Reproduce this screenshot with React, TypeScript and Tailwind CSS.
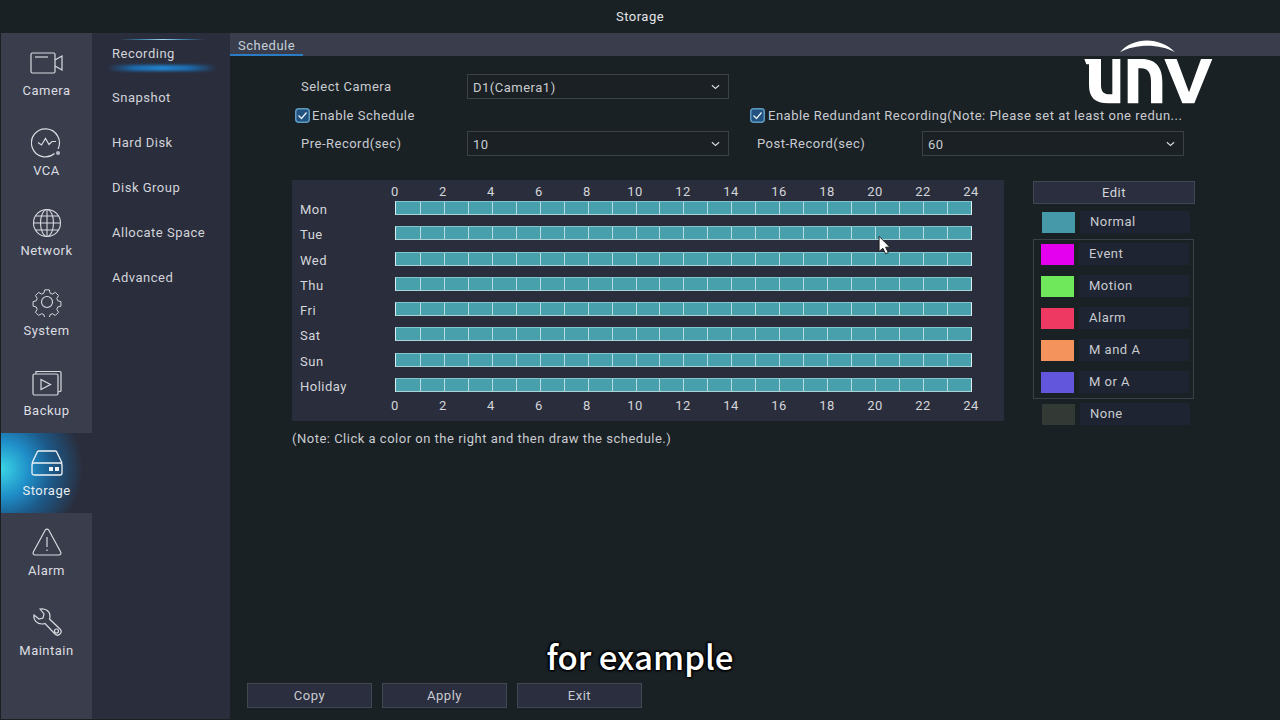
import type { ReactNode } from "react";

const font = "font-['Roboto',sans-serif]";

const navItems: { label: string; gap: string; icon: ReactNode; active?: boolean }[] = [
  {
    label: "Camera",
    gap: "gap-[7px]",
    icon: (
      <svg viewBox="0 0 34 24" className="w-[34px] h-[24px] fill-none stroke-[#d8dae0]" strokeWidth="1.2">
        <rect x="1" y="2" width="24" height="20" rx="1.5" />
        <path d="M25 9l7-4v14l-7-4" />
        <path d="M5 6h13" />
      </svg>
    ),
  },
  {
    label: "VCA",
    gap: "gap-[4px]",
    icon: (
      <svg viewBox="0 0 32 32" className="w-[32px] h-[32px] fill-none stroke-[#d8dae0]" strokeWidth="1.2">
        <path d="M27 23A14 14 0 1 0 23.5 27.5" />
        <path d="M7 16.5l3.5 2.5 4-6.5 3.500 6 3-3h4" />
        <circle cx="27" cy="27" r="2" className="fill-[#b9bcc6]" stroke="none" />
      </svg>
    ),
  },
  {
    label: "Network",
    gap: "gap-[4px]",
    icon: (
      <svg viewBox="0 0 30 30" className="w-[30px] h-[30px] fill-none stroke-[#d8dae0]" strokeWidth="1.1">
        <circle cx="15" cy="15" r="13.500" />
        <ellipse cx="15" cy="15" rx="6.500" ry="13.500" />
        <path d="M15 1.500v27M1.500 15h27M3.500 8h23M3.500 22h23" />
      </svg>
    ),
  },
  {
    label: "System",
    gap: "gap-[5px]",
    icon: (
      <svg viewBox="0 0 30 30" className="w-[30px] h-[30px] fill-none stroke-[#d8dae0]" strokeWidth="1.1">
        <circle cx="15" cy="15" r="5.500" />
        <path d="M12.500 1.500h5l1 3.700 2.500 1 3.300-1.900 3.500 3.500-1.900 3.300 1 2.500 3.600 1v5l-3.600 1-1 2.500 1.900 3.300-3.500 3.500-3.300-1.900-2.500 1-1 3.500h-5l-1-3.500-2.500-1-3.300 1.900-3.500-3.500 1.900-3.300-1-2.500-3.600-1v-5l3.600-1 1-2.500-1.900-3.300 3.500-3.500 3.300 1.900 2.500-1z" transform="translate(1.500 1.500) scale(.9)" strokeLinejoin="round" />
      </svg>
    ),
  },
  {
    label: "Backup",
    gap: "gap-[6px]",
    icon: (
      <svg viewBox="0 0 30 26" className="w-[30px] h-[26px] fill-none stroke-[#d8dae0]" strokeWidth="1.2">
        <rect x="1" y="4" width="25" height="21" rx="1.500" />
        <path d="M4 4V1.500h24a1 1 0 0 1 1 1V21l-3 1" />
        <path d="M9 9.500l9.500 5-9.500 5z" />
      </svg>
    ),
  },
  {
    label: "Storage",
    gap: "gap-[6px]",
    active: true,
    icon: (
      <svg viewBox="0 0 32 26" className="w-[32px] h-[26px] fill-none stroke-[#eef2f5]" strokeWidth="1.300">
        <path d="M1 13L6 2.500A2 2 0 0 1 8 1h16a2 2 0 0 1 2 1.500L31 13" />
        <rect x="1" y="13" width="30" height="12" rx="2" />
        <rect x="18" y="17" width="4" height="4" className="fill-[#eef2f5]" stroke="none" />
        <rect x="24" y="17" width="4" height="4" className="fill-[#eef2f5]" stroke="none" />
      </svg>
    ),
  },
  {
    label: "Alarm",
    gap: "gap-[6px]",
    icon: (
      <svg viewBox="0 0 30 28" className="w-[30px] h-[28px] fill-none stroke-[#d8dae0]" strokeWidth="1.200">
        <path d="M13.300 2a2 2 0 0 1 3.400 0l12 22a2 2 0 0 1-1.700 3H3a2 2 0 0 1-1.700-3z" />
        <path d="M15 9v10M15 21.500v1.500" />
      </svg>
    ),
  },
  {
    label: "Maintain",
    gap: "gap-[5px]",
    icon: (
      <svg viewBox="0 0 30 30" className="w-[30px] h-[30px] fill-none stroke-[#d8dae0]" strokeWidth="1.200">
        <path d="M2 8l5 4 4-1 1-4-4-5c5-1 10 2 10 7 0 1 0 2-.5 3L28 22c2 2 1 4 0 5s-3 2-5 0L13 16.500c-1 .5-2 .5-3 .5-5 0-9-4-8-9z" />
        <circle cx="24.500" cy="24" r="2" />
      </svg>
    ),
  },
];

const subItems = ["Recording", "Snapshot", "Hard Disk", "Disk Group", "Allocate Space", "Advanced"];
const days = ["Mon", "Tue", "Wed", "Thu", "Fri", "Sat", "Sun", "Holiday"];
const hours = [0, 2, 4, 6, 8, 10, 12, 14, 16, 18, 20, 22, 24];

const legend = [
  { name: "Event", color: "bg-[#e400ee]" },
  { name: "Motion", color: "bg-[#6fe85c]" },
  { name: "Alarm", color: "bg-[#ee3a63]" },
  { name: "M and A", color: "bg-[#f5935c]" },
  { name: "M or A", color: "bg-[#6257dc]" },
];

function Chevron() {
  return (
    <svg viewBox="0 0 10 6" className="w-[9px] h-[6px] fill-none stroke-[#d5d7dc]" strokeWidth="1.300">
      <path d="M1 1l4 3.500L9 1" />
    </svg>
  );
}

function Select({ value }: { value: string }) {
  return (
    <div className="w-[262px] h-[25px] flex items-center justify-between pl-[5px] pr-[8px] border border-[#3c4147] bg-[#1a2024] text-[13px] text-[#c9cbd0]">
      <span className="mt-[2px]">{value}</span>
      <Chevron />
    </div>
  );
}

function Check() {
  return (
    <svg viewBox="0 0 15 15" className="w-[15px] h-[15px] shrink-0">
      <rect x="0.750" y="0.750" width="13.500" height="13.500" rx="3" className="fill-[#22527f] stroke-[#5f9ac0]" strokeWidth="1.500" />
      <path d="M3.500 7.500l3 3 5-6" className="fill-none stroke-[#e8f0f5]" strokeWidth="1.300" />
    </svg>
  );
}

function HourScale() {
  return (
    <div className="flex h-[18px] pl-[79px]">
      {hours.map((h) => (
        <span key={h} className="w-[48px] text-center text-[13px] leading-[18px] text-[#d4d6da]">{h}</span>
      ))}
    </div>
  );
}

function DayBar() {
  return (
    <div className="w-[577px] h-[14px] flex bg-[#48a0ad] border-t border-t-[#7fc6ce] border-b border-b-[#a9d5d8] border-l border-l-[#d8eef0] border-r border-r-[#e0f0f0]">
      {Array.from({ length: 24 }).map((_, i) => (
        <div key={i} className={`w-[24px] h-full ${i > 0 ? "border-l border-l-[#b5dcdf]" : ""}`} />
      ))}
    </div>
  );
}

function Swatch({ name, color }: { name: string; color: string }) {
  return (
    <div className="flex items-center h-[22px] gap-[5px]">
      <div className={`w-[33px] h-[21px] ${color}`} />
      <div className="w-[110px] h-[22px] pl-[10px] bg-[#22263a]/60 text-[13px] leading-[22px] text-[#c9cbd0]">{name}</div>
    </div>
  );
}

function ActionButton({ label }: { label: string }) {
  return (
    <button className="w-[125px] h-[25px] bg-[#2b2e3e] border border-[#43474f] text-[13px] text-[#c9cbd0]">{label}</button>
  );
}

export default function App() {
  return (
    <div className={`relative w-[1280px] h-[720px] overflow-hidden bg-[#1a2125] tracking-[0.5px] ${font}`}>
      <div className="h-[33px] flex items-center justify-center text-[13px] text-[#e4e5e8]">Storage</div>

      <div className="flex h-[686px] pl-px">
        <nav className="w-[91px] bg-[#3a3d4c] flex flex-col">
          {navItems.map((item) => (
            <div
              key={item.label}
              className={`h-[80px] flex flex-col items-center justify-end pb-[13px] ${item.gap} text-[13px] leading-[18px] ${
                item.active
                  ? "bg-[radial-gradient(ellipse_82px_80px_at_0%_45%,#3ad5e6_0%,#1f8ec8_35%,#1c5a8a_62%,#2a2d3c_100%)] text-[#e8edf0]"
                  : "text-[#dcdee2]"
              }`}
            >
              {item.icon}
              <span>{item.label}</span>
            </div>
          ))}
        </nav>

        <aside className="relative w-[138px] bg-[#2a2d3c] pl-[20px]">
          <div className="absolute left-[28px] top-[6px] w-[85px] h-px bg-[linear-gradient(90deg,transparent,#3b7fa8,#9fd8ee,#3b7fa8,transparent)]" />
          <div className="absolute left-[15px] top-[32px] w-[110px] h-[6px] blur-[1.5px] bg-[linear-gradient(90deg,transparent,#1c6cb0,#2386d0,#1c6cb0,transparent)]" />
          <div className="-mt-[2px] flex flex-col">
            {subItems.map((s) => (
              <div key={s} className="h-[44.800px] flex items-center text-[13px] text-[#d2d4d9]">{s}</div>
            ))}
          </div>
        </aside>

        <main className="flex-1 flex flex-col">
          <div className="h-[23px] bg-[#3a3d4c] flex">
            <div className="w-[73px] h-full border-b-2 border-b-[#2b7cc4] pl-[8px] text-[13px] leading-[25px] text-[#c4d0da]">Schedule</div>
          </div>

          <div className="relative flex-1 flex flex-col pl-[62px] pt-[18px]">
            <div className="flex items-center h-[25px]">
              <span className="w-[175px] pl-[9px] text-[13px] text-[#c9cbd0]">Select Camera</span>
              <Select value="D1(Camera1)" />
            </div>
            <div className="flex items-center h-[32px] pt-[1px] text-[13px] text-[#c9cbd0]">
              <div className="w-[458px] flex items-center gap-[2px] pl-[3px]">
                <Check />
                <span>Enable Schedule</span>
              </div>
              <div className="flex items-center gap-[3px]">
                <Check />
                <span className="whitespace-nowrap">Enable Redundant Recording(Note: Please set at least one redun...</span>
              </div>
            </div>
            <div className="flex items-center h-[25px] text-[13px] text-[#c9cbd0]">
              <span className="w-[175px] pl-[9px]">Pre-Record(sec)</span>
              <Select value="10" />
              <span className="w-[193px] pl-[28px]">Post-Record(sec)</span>
              <Select value="60" />
            </div>

            <div className="flex items-start mt-[24px]">
              <div className="w-[712px] h-[241px] bg-[#2a2d3c] pt-[3px]">
                <HourScale />
                <div className="flex flex-col gap-[11.300px]">
                  {days.map((d) => (
                    <div key={d} className="flex items-center h-[14px]">
                      <span className="w-[103px] pl-[8px] mt-[4px] text-[13px] leading-[14px] text-[#d4d6da]">{d}</span>
                      <DayBar />
                    </div>
                  ))}
                </div>
                <div className="mt-[5px]"><HourScale /></div>
              </div>

              <div className="ml-[29px] w-[163px]">
                <button className="w-[162px] h-[23px] bg-[#2b2e3e] border border-[#43474f] text-[13px] text-[#d4d6da]">Edit</button>
                <div className="pl-[9px] mt-[7px]"><Swatch name="Normal" color="bg-[#4599a9]" /></div>
                <div className="w-[161px] h-[160px] mt-[6px] border border-[#3c4147] flex flex-col gap-[10px] pt-[3px] pl-[7px]">
                  {legend.map((l) => <Swatch key={l.name} name={l.name} color={l.color} />)}
                </div>
                <div className="pl-[9px] mt-[4px]"><Swatch name="None" color="bg-[#333a35]" /></div>
              </div>
            </div>

            <p className="mt-[4px] text-[13px] text-[#c9cbd0]">(Note: Click a color on the right and then draw the schedule.)</p>

            <div className="absolute left-[17px] top-[627px] flex gap-[10px]">
              <ActionButton label="Copy" />
              <ActionButton label="Apply" />
              <ActionButton label="Exit" />
            </div>
          </div>
        </main>
      </div>

      {/* logo + subtitle + pointer sit on top of the video frame */}
      <svg viewBox="0 0 450 225" className="absolute left-[1075px] top-[35px] w-[150px] h-[75px]" fill="#fff">
        <path d="M135 52C175 5 255 5 300 52 255 26 180 26 135 52z" />
        <path d="M28 72H78V150C78 172 88 178 105 178H112V72H136V205H100C60 205 42 188 42 150V88H34z" />
        <path d="M158 205V72H200C245 72 262 100 262 140V205H228V140C228 112 218 100 198 100H190V205z" />
        <path d="M268 72H305L342 172 378 72H412L358 205H322z" />
      </svg>

      <svg viewBox="0 0 12 18" className="absolute left-[878px] top-[235px] w-[13px] h-[20px]">
        <path d="M1 1v14l3.500-3 2.500 5 2.500-1-2.500-5H11z" fill="#fff" stroke="#111" strokeWidth="0.800" />
      </svg>

      <div className="absolute left-0 right-0 top-[633px] text-center text-[33px] leading-[46px] font-medium tracking-normal text-white font-['Noto_Sans_CJK_SC','Noto_Sans',sans-serif] [text-shadow:0_0_3px_#000,1px_1px_2px_#000,-1px_-1px_2px_#000,1px_-1px_2px_#000,-1px_1px_2px_#000]">
        for example
      </div>
    </div>
  );
}
